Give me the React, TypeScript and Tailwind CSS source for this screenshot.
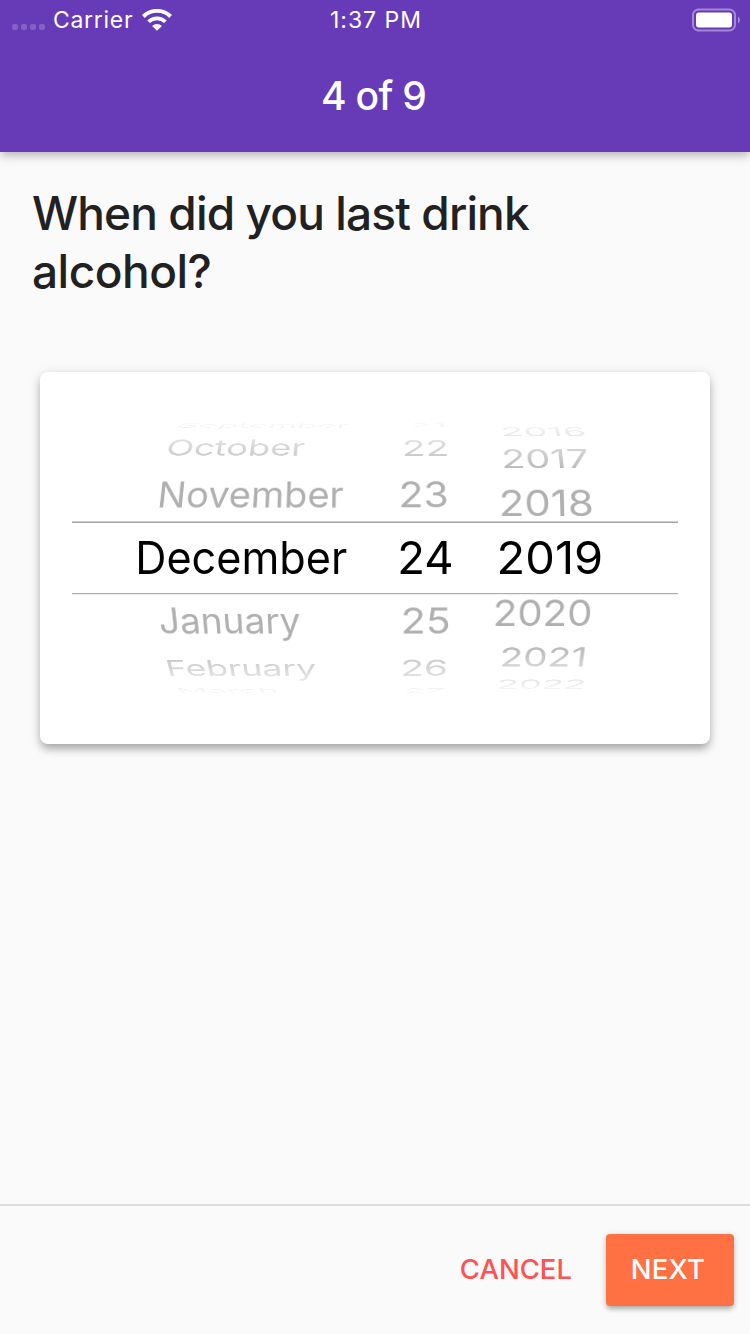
import React from "react";

type Label = {
  text: string;
  x: number; // left edge inside the column
  y: number; // distance from the wheel's centre
  sx: number;
  sy: number;
  tilt: number; // perspective factor, negative above the centre
  selected?: boolean;
};

type Column = { className: string; vanish: number; labels: Label[] };

const columns: Column[] = [
  {
    className: "w-[308px]",
    vanish: 273,
    labels: [
      { text: "September", x: 106.4, y: -132.7, sx: 0.731, sy: 0.14, tilt: -0.0009 },
      { text: "October", x: 94.6, y: -110.3, sx: 0.804, sy: 0.49, tilt: -0.0007 },
      { text: "November", x: 85.7, y: -63.2, sx: 0.843, sy: 0.79, tilt: -0.0005 },
      { text: "December", x: 63.2, y: 0, sx: 0.96, sy: 1, tilt: 0, selected: true },
      { text: "January", x: 86.6, y: 63, sx: 0.823, sy: 0.79, tilt: 0.0005 },
      { text: "February", x: 93.8, y: 110.4, sx: 0.79, sy: 0.49, tilt: 0.0007 },
      { text: "March", x: 105.2, y: 132.5, sx: 0.75, sy: 0.14, tilt: 0.0009 },
    ],
  },
  {
    className: "w-[96px]",
    vanish: 20,
    labels: [
      { text: "21", x: 28.9, y: -132.7, sx: 0.827, sy: 0.13, tilt: -0.0009 },
      { text: "22", x: 22, y: -110, sx: 0.855, sy: 0.48, tilt: -0.0007 },
      { text: "23", x: 18.6, y: -63.4, sx: 0.905, sy: 0.79, tilt: -0.0004 },
      { text: "24", x: 17.3, y: 0, sx: 1.01, sy: 1, tilt: 0, selected: true },
      { text: "25", x: 20.8, y: 63, sx: 0.91, sy: 0.79, tilt: 0.0004 },
      { text: "26", x: 20.3, y: 110, sx: 0.861, sy: 0.49, tilt: 0.0006 },
      { text: "27", x: 24.1, y: 132.5, sx: 0.776, sy: 0.13, tilt: 0.0009 },
    ],
  },
  {
    className: "flex-1",
    vanish: -16,
    labels: [
      { text: "2016", x: 24.4, y: -126.3, sx: 0.839, sy: 0.28, tilt: -0.0008 },
      { text: "2017", x: 25.2, y: -99.2, sx: 0.879, sy: 0.58, tilt: -0.0006 },
      { text: "2018", x: 22.8, y: -54.8, sx: 0.93, sy: 0.8, tilt: -0.0002 },
      { text: "2019", x: 20.6, y: 0, sx: 1.044, sy: 1, tilt: 0, selected: true },
      { text: "2020", x: 16.9, y: 55.2, sx: 0.892, sy: 0.8, tilt: 0.0002 },
      { text: "2021", x: 23.6, y: 99.3, sx: 0.86, sy: 0.58, tilt: 0.0006 },
      { text: "2022", x: 20.8, y: 126.3, sx: 0.804, sy: 0.28, tilt: 0.0008 },
    ],
  },
];

function wheelTransform(l: Label, vanish: number) {
  return `matrix3d(${l.sx},0,0,0, ${vanish * l.tilt},${l.sy + l.y * l.tilt},0,${l.tilt}, 0,0,1,0, ${l.x},${l.y},0,1)`;
}

function Wheel({ column }: { column: Column }) {
  return (
    <div className={`grid items-center justify-items-start ${column.className}`}>
      {column.labels.map((l) => (
        <span
          key={l.text}
          className={`col-start-1 row-start-1 w-0 origin-left whitespace-nowrap text-[45px] font-[370] leading-[54px] ${
            l.selected ? "text-black" : "text-[#b0b0b0]"
          }`}
          style={{ transform: wheelTransform(l, column.vanish) }}
        >
          {l.text}
        </span>
      ))}
    </div>
  );
}

function StatusBar() {
  return (
    <div className="grid h-10 grid-cols-[1fr_auto_1fr] items-center text-[22.5px] leading-none text-white">
      <div className="flex items-center">
        <div className="ml-3 mt-[14px] flex gap-[3px]">
          {[0, 1, 2, 3].map((i) => (
            <span key={i} className="size-[6px] rounded-[2px] bg-white/20" />
          ))}
        </div>
        <span className="ml-2 text-[23px] tracking-[0.7px]">Carrier</span>
        <svg className="ml-[9px] h-[22px] w-[30px]" viewBox="0 0 30 22" fill="none" stroke="white">
          <path d="M1.4 7.5 A19.2 19.2 0 0 1 28.6 7.5" strokeWidth="4" />
          <path d="M6.6 12.8 A11.9 11.9 0 0 1 23.4 12.8" strokeWidth="3.7" />
          <path d="M10.1 17 A6.9 6.9 0 0 1 19.9 17 L15 21.8 Z" fill="white" stroke="none" />
        </svg>
      </div>
      <span className="pl-[2px] text-[23px] tracking-[1px]">1:37 PM</span>
      <svg className="mr-[9px] h-[24px] w-[50px] justify-self-end" viewBox="0 0 50 24" fill="none">
        <rect x="2" y="1.5" width="42" height="21" rx="5.5" stroke="white" strokeOpacity="0.4" strokeWidth="2" />
        <rect x="5" y="4.5" width="36" height="15" rx="3" fill="white" />
        <path d="M47 8.5 Q49 9.5 49 12 T47 15.5 Z" fill="white" fillOpacity="0.4" />
      </svg>
    </div>
  );
}

export default function App() {
  return (
    <div className="flex h-[1334px] w-[750px] flex-col bg-[#fafafa] font-[Inter,sans-serif]">
      <header className="h-[152px] bg-[#673ab7] shadow-[0_4px_8px_-1px_rgba(0,0,0,0.2),0_4px_12px_rgba(0,0,0,0.1)]">
        <StatusBar />
        <h1 className="flex h-[112px] items-center justify-center pr-[3px] text-[39px] font-[550] tracking-[-0.7px] text-white">
          4 of 9
        </h1>
      </header>

      <main className="flex-1 px-8 pt-8">
        <h2 className="text-[46px] font-[480] leading-[58px] text-[#212121]">
          <span className="block tracking-[-0.88px]">When did you last drink</span>
          <span className="block tracking-[-0.5px]">alcohol?</span>
        </h2>

        <section className="mx-2 mt-[72px] h-[372px] rounded-lg bg-white px-8 shadow-[0_6px_8px_-1px_rgba(0,0,0,0.26),0_2px_12px_rgba(0,0,0,0.14)]">
          <div className="relative flex h-full">
            <div className="flex w-full [mask-image:linear-gradient(to_bottom,transparent_47px,black_103px,black_269px,transparent_325px)]">
              {columns.map((c, i) => (
                <Wheel key={i} column={c} />
              ))}
            </div>
            <div className="absolute inset-x-0 top-[149px] h-[74px]">
              <div className="h-[2px] bg-linear-to-b from-[#cfcfcf] from-50% to-[#a3a3a3] to-50%" />
              <div className="mt-[70px] h-[2px] bg-linear-to-b from-[#adadad] from-50% to-[#eeeeee] to-50%" />
            </div>
          </div>
        </section>
      </main>

      <footer className="flex h-[130px] justify-end border-t-2 border-[#dcdcdc] pr-4 pt-7 text-[27.5px] font-medium">
        <button className="mr-[34px] h-[72px] text-[#ff5252]">CANCEL</button>
        <button className="h-[72px] w-32 rounded-[4px] bg-[#ff7043] pr-1 tracking-[0.3px] text-white shadow-[0_4px_5px_-1px_rgba(0,0,0,0.26),0_1px_7px_rgba(0,0,0,0.12)]">
          NEXT
        </button>
      </footer>
    </div>
  );
}
